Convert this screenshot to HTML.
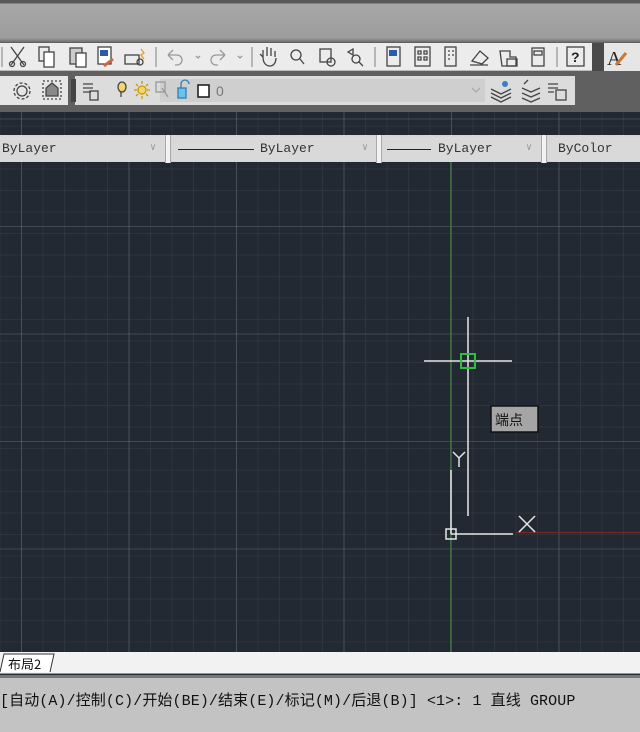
<!DOCTYPE html>
<html><head><meta charset="utf-8"><style>
*{margin:0;padding:0;box-sizing:border-box}
body{width:640px;height:732px;overflow:hidden;position:relative;background:#222932;font-family:"Liberation Sans","Noto Sans CJK SC",sans-serif}
.abs{position:absolute}
#top{left:0;top:0;width:640px;height:42px;background:linear-gradient(#5a5a5a 0,#5a5a5a 3px,#a8a8a8 4px,#9c9c9c 38px,#6e6e6e 42px)}
#band{left:0;top:42px;width:640px;height:70px;background:#606060}
#tb1{left:0;top:43px;width:592px;height:28px;background:#ececec;border-bottom:1px solid #bbb}
#tb1b{left:592px;top:43px;width:12px;height:28px;background:#4a4a4a}
#tb1c{left:604px;top:43px;width:36px;height:28px;background:#e6e6e6}
#tb2a{left:0;top:76px;width:68px;height:29px;background:#e6e6e6}
#tb2{left:75px;top:76px;width:500px;height:29px;background:#dcdcdc}
#layer{left:160px;top:79px;width:325px;height:23px;background:#cfcfcf}
#canvas{left:0;top:112px;width:640px;height:540px;background-color:#222932;
background-image:
linear-gradient(90deg,rgba(140,150,165,.28) 1px,transparent 1px),
linear-gradient(rgba(140,150,165,.28) 1px,transparent 1px),
linear-gradient(90deg,rgba(120,130,145,.12) 1px,transparent 1px),
linear-gradient(rgba(120,130,145,.12) 1px,transparent 1px);
background-size:107.5px 107.5px,107.5px 107.5px,21.5px 21.5px,21.5px 21.5px;
background-position:21px 0,0 -101px,21px 0,0 -8px}
#prop{left:0;top:135px;width:640px;height:27px;background:#d6d6d6}
.cb{position:absolute;top:2px;height:24px;background:#d9d9d9;font-family:"Liberation Mono",monospace;font-size:13px;color:#333;line-height:24px}
.sep{position:absolute;top:0;width:6px;height:28px;background:#f2f2f2;border-left:1px solid #aaa;border-right:1px solid #aaa}
.chev{position:absolute;top:0;font-size:10px;color:#999}
#tabs{left:0;top:652px;width:640px;height:22px;background:#f2f2f2;border-bottom:1px solid #999}
#cmd{left:0;top:675px;width:640px;height:57px;background:#c3c3c3;border-top:3px solid #777}
</style></head><body>
<div id="top" class="abs"></div>
<div id="band" class="abs"></div>
<div id="tb1" class="abs"></div>
<div id="tb1b" class="abs"></div>
<div id="tb1c" class="abs"></div>
<svg class="abs" style="left:0;top:43px" width="640" height="28" fill="none" stroke="#444" stroke-width="1.3">
<line x1="2" y1="4" x2="2" y2="24" stroke="#999"/>
<path d="M11 4l13 18M24 4L11 22"/><circle cx="12" cy="21" r="2.5"/><circle cx="23" cy="21" r="2.5"/>
<rect x="39" y="4" width="10" height="14"/><rect x="44" y="9" width="10" height="15" fill="#fff"/>
<rect x="70" y="5" width="12" height="16" fill="#ccc"/><rect x="76" y="10" width="10" height="14" fill="#fff"/>
<rect x="98" y="4" width="13" height="17" fill="#fff"/><rect x="100" y="7" width="8" height="6" fill="#2a5aa8" stroke="none"/><path d="M104 23l9-7" stroke="#c64" stroke-width="3"/>
<rect x="125" y="12" width="14" height="9"/><circle cx="140" cy="19" r="3"/><path d="M141 6l3 4-3 2 3 4" stroke="#e0a020"/>
<line x1="156" y1="4" x2="156" y2="24" stroke="#999"/>
<path d="M168 12h9a5 5 0 0 1 0 10h-2M168 12l5-5M168 12l5 5" stroke="#999"/>
<path d="M196 13l2 2 2-2" stroke="#999"/>
<path d="M225 12h-9a5 5 0 0 0 0 10h2M225 12l-5-5M225 12l-5 5" stroke="#999"/>
<path d="M238 13l2 2 2-2" stroke="#999"/>
<line x1="252" y1="4" x2="252" y2="24" stroke="#999"/>
<path d="M263 14v-7M267 13v-9M271 13v-8M275 14v-6M263 14c0 6 3 9 7 9s6-4 6-8M263 14l-3-3"/>
<circle cx="296" cy="12" r="5"/><path d="M300 16l4 5"/>
<rect x="320" y="6" width="11" height="13"/><circle cx="331" cy="19" r="4"/>
<circle cx="356" cy="16" r="4"/><path d="M359 19l4 4M348 9l5-3v6z"/>
<line x1="375" y1="4" x2="375" y2="24" stroke="#999"/>
<rect x="387" y="4" width="13" height="19"/><rect x="389" y="7" width="8" height="6" fill="#2a5aa8" stroke="none"/>
<rect x="415" y="4" width="15" height="19"/><path d="M418 8h3v3h-3zM424 8h3v3h-3zM418 14h3v3h-3zM424 14h3v3h-3z"/>
<rect x="445" y="4" width="11" height="19"/><path d="M448 8h2M448 12h2M448 16h2M452 8h2M452 12h2"/>
<path d="M472 18l8-10 8 7-6 6z M470 22h18"/>
<path d="M500 8h10v6h6v9h-14z"/><rect x="507" y="16" width="10" height="7"/>
<rect x="532" y="5" width="12" height="18"/><rect x="534" y="8" width="8" height="4"/>
<line x1="557" y1="4" x2="557" y2="24" stroke="#999"/>
<rect x="567" y="4" width="17" height="19"/><text x="571" y="19" font-size="14" fill="#222" stroke="none" font-weight="bold" font-family="Liberation Sans">?</text>
<text x="607" y="22" font-size="20" fill="#222" stroke="none" font-family="Liberation Serif">A</text><path d="M616 22l10-12" stroke="#c73" stroke-width="3"/>
</svg>
<div id="tb2a" class="abs"></div>
<div id="tb2" class="abs"></div>
<div id="layer" class="abs"></div>
<svg class="abs" style="left:0;top:76px" width="640" height="29" fill="none" stroke="#444" stroke-width="1.3">
<circle cx="22" cy="15" r="5"/><circle cx="22" cy="15" r="8" stroke-dasharray="3 2"/>
<rect x="43" y="5" width="18" height="18" stroke-dasharray="2 2"/><path d="M46 20v-8l6-5 6 5v8z" fill="#888"/>
<rect x="71" y="3" width="5" height="23" fill="#444" stroke="none"/>
<path d="M83 8h10M83 12h10M83 16h8"/><rect x="90" y="15" width="8" height="9"/>
<ellipse cx="122" cy="11" rx="4" ry="5" fill="#f5d56a"/><path d="M121 16v5"/>
<circle cx="142" cy="14" r="4" fill="#f5d56a" stroke="#c90"/><path d="M142 5v3M142 20v3M134 14h3M147 14h3M136 8l2 2M148 8l-2 2M136 20l2-2M148 20l-2-2" stroke="#c90"/>
<rect x="156" y="6" width="9" height="10" stroke="#999"/><path d="M162 12l6 9" stroke="#999"/>
<path d="M181 12v-4a4 4 0 0 1 8 0" stroke="#2a7fb8"/><rect x="178" y="12" width="8" height="10" fill="#6ec1e8" stroke="#2a7fb8"/>
<rect x="198" y="9" width="11" height="12" fill="#fff" stroke="#222" stroke-width="1.6"/>
<text x="216" y="20" font-size="14" fill="#777" stroke="none" font-family="Liberation Sans">0</text>
<path d="M472 12l4 4 4-4" stroke="#aaa"/>
<path d="M491 13l10 5 10-5M491 17l10 5 10-5M491 21l10 5 10-5"/><circle cx="505" cy="8" r="3" fill="#3a7fc8" stroke="none"/>
<path d="M522 12l9 4 9-4M522 17l9 4 9-4M522 22l9 4 9-4M524 8l4-4"/>
<path d="M548 8h10M548 12h10M548 16h6"/><rect x="556" y="14" width="10" height="10"/>
</svg>
<div id="canvas" class="abs"></div>
<div id="prop" class="abs">
<div class="cb" style="left:0;width:165px;padding-left:2px">ByLayer<span class="chev" style="left:150px">∨</span></div>
<div class="sep" style="left:165px"></div>
<div class="cb" style="left:172px;width:204px"><span style="position:absolute;left:6px;top:12px;width:76px;border-top:1px solid #222"></span><span style="position:absolute;left:88px">ByLayer</span><span class="chev" style="left:190px">∨</span></div>
<div class="sep" style="left:376px"></div>
<div class="cb" style="left:383px;width:158px"><span style="position:absolute;left:4px;top:12px;width:44px;border-top:1px solid #222"></span><span style="position:absolute;left:55px">ByLayer</span><span class="chev" style="left:143px">∨</span></div>
<div class="sep" style="left:541px"></div>
<div class="cb" style="left:548px;width:92px;padding-left:10px">ByColor</div>
</div>
<svg class="abs" style="left:0;top:162px" width="640" height="490" fill="none">
<line x1="450.5" y1="0" x2="450.5" y2="490" stroke="#3d6a45" stroke-width="1"/>
<line x1="515" y1="370.5" x2="640" y2="370.5" stroke="#7a2a2a" stroke-width="1"/>
<g stroke="#e6e6e6" stroke-width="1.5">
<line x1="468" y1="155" x2="468" y2="354"/>
<line x1="424" y1="199" x2="512" y2="199"/>
<line x1="451" y1="308" x2="451" y2="372"/>
<line x1="451" y1="372" x2="513" y2="372"/>
<rect x="446" y="367" width="10" height="10"/>
<path d="M453 290l6 6 6-6M459 296v9"/>
<path d="M519 354l16 16M535 354l-16 16"/>
</g>
<rect x="461" y="192" width="14" height="14" stroke="#2bbf3a" stroke-width="2"/>
<rect x="491" y="244" width="47" height="26" fill="#a5a5a5" stroke="#111" stroke-width="1.5"/>
<text x="495" y="263" font-size="14" fill="#111" font-family="Noto Sans CJK SC,sans-serif">端点</text>
</svg>
<div id="tabs" class="abs"><svg width="80" height="22"><path d="M0 20L4 2h50l-4 18" fill="#fff" stroke="#333"/><text x="8" y="17" font-size="13" fill="#111" font-family="Noto Sans CJK SC,sans-serif">布局2</text></svg></div>
<div id="cmd" class="abs"><div style="position:absolute;left:0;top:11px;font-family:'Liberation Mono','Noto Sans CJK SC',monospace;font-size:15px;letter-spacing:0.1px;color:#111;white-space:nowrap">[自动(A)/控制(C)/开始(BE)/结束(E)/标记(M)/后退(B)] &lt;1&gt;: 1 直线 GROUP</div></div>
</body></html>
